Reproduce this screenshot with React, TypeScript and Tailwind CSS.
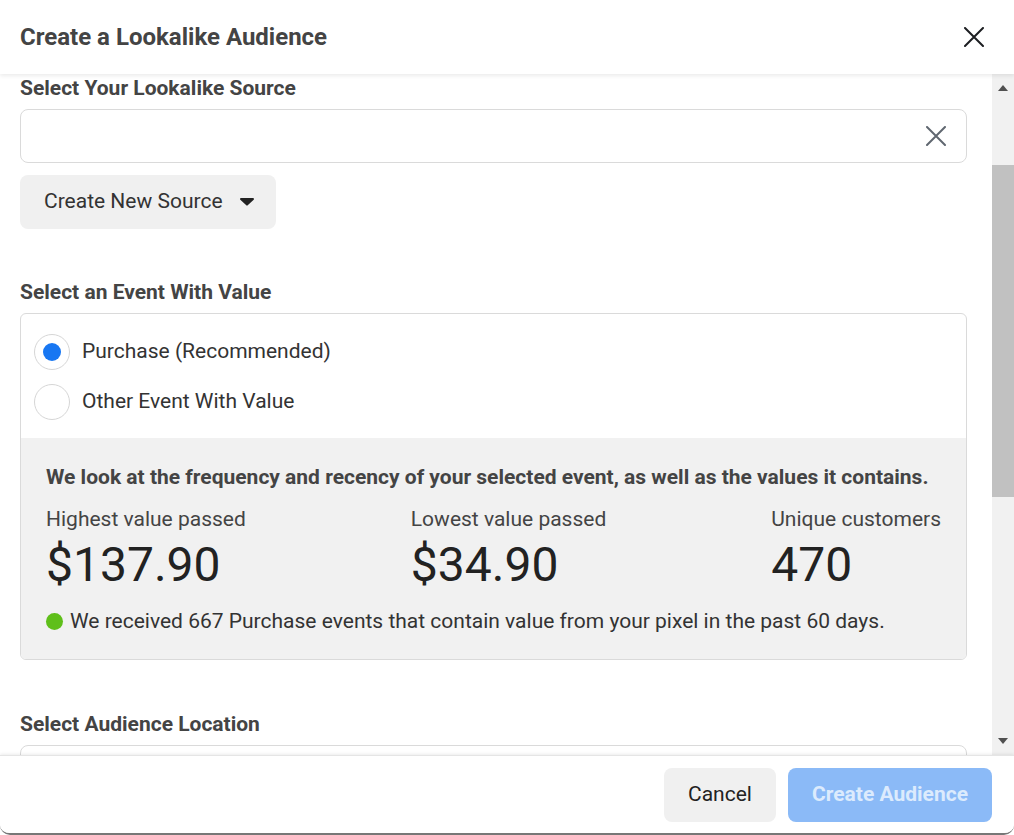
const font = { fontFamily: 'Roboto, "Liberation Sans", sans-serif' }

function Cross({ size, color, width }: { size: number; color: string; width: number }) {
  return (
    <svg width={size} height={size} viewBox={`0 0 ${size} ${size}`}>
      <path d={`M1 1L${size - 1} ${size - 1}M${size - 1} 1L1 ${size - 1}`} stroke={color} strokeWidth={width} strokeLinecap="round" />
    </svg>
  )
}

function Radio({ checked, label }: { checked?: boolean; label: string }) {
  return (
    <div className="flex items-center h-[50px]">
      <div className="w-[36px] h-[36px] rounded-full border border-[#d6d6d6] bg-white flex items-center justify-center">
        {checked && <div className="w-[18px] h-[18px] rounded-full bg-[#1877f2]" />}
      </div>
      <span className="ml-[12px] text-[21px] text-[#333]">{label}</span>
    </div>
  )
}

function Stat({ label, value }: { label: string; value: string }) {
  return (
    <div>
      <div className="text-[21px] text-[#444] leading-[26px]">{label}</div>
      <div className="text-[48px] text-[#222] leading-[56px] mt-[5px]">{value}</div>
    </div>
  )
}

export default function App() {
  return (
    <div style={font} className="w-[1014px] h-[835px] bg-white flex flex-col overflow-hidden rounded-b-[10px] border-b-2 border-[#777]">
      <div className="h-[74px] shrink-0 flex items-center justify-between pl-[20px] pr-[30px] shadow-[0_2px_4px_rgba(0,0,0,0.08)] relative z-10">
        <h1 className="text-[24px] font-bold text-[#444]">Create a Lookalike Audience</h1>
        <Cross size={20} color="#1c1e21" width={2} />
      </div>

      <div className="flex-1 flex min-h-0">
        <div className="flex-1 overflow-hidden pl-[20px] pr-[25px]">
          <div className="text-[21px] font-bold text-[#444] mt-[1px] leading-[26px]">Select Your Lookalike Source</div>
          <div className="mt-[8px] h-[54px] border border-[#dadada] rounded-[8px] flex items-center justify-end pr-[20px]">
            <Cross size={20} color="#606770" width={2} />
          </div>
          <div className="mt-[12px] inline-flex items-center h-[54px] bg-[#f0f0f0] rounded-[8px] pl-[24px] pr-[22px]">
            <span className="text-[21px] text-[#333]">Create New Source</span>
            <svg width="14" height="8" viewBox="0 0 14 8" className="ml-[17px]">
              <path d="M1 0h12a1 1 0 0 1 .7 1.7L7.7 7.3a1 1 0 0 1-1.4 0L.3 1.7A1 1 0 0 1 1 0z" fill="#222" />
            </svg>
          </div>

          <div className="text-[21px] font-bold text-[#444] mt-[50px] leading-[26px]">Select an Event With Value</div>
          <div className="mt-[8px] border border-[#dadada] rounded-[6px] overflow-hidden">
            <div className="pl-[13px] pt-[13px] pb-[11px]">
              <Radio checked label="Purchase (Recommended)" />
              <Radio label="Other Event With Value" />
            </div>
            <div className="bg-[#f1f1f1] px-[25px] pt-[26px] pb-[21px]">
              <div className="text-[21px] font-bold text-[#444] leading-[26px]">
                We look at the frequency and recency of your selected event, as well as the values it contains.
              </div>
              <div className="flex justify-between mt-[16px]">
                <Stat label="Highest value passed" value="$137.90" />
                <Stat label="Lowest value passed" value="$34.90" />
                <Stat label="Unique customers" value="470" />
              </div>
              <div className="flex items-center mt-[13px]">
                <div className="w-[17px] h-[17px] rounded-full bg-[#5fbf1a]" />
                <span className="ml-[7px] text-[21px] text-[#333]">
                  We received 667 Purchase events that contain value from your pixel in the past 60 days.
                </span>
              </div>
            </div>
          </div>

          <div className="text-[21px] font-bold text-[#444] mt-[51px] leading-[26px]">Select Audience Location</div>
          <div className="mt-[8px] h-[54px] border border-[#dadada] rounded-[8px]" />
        </div>

        <div className="w-[22px] shrink-0 bg-[#f1f1f1] flex flex-col items-center">
          <div className="h-[28px] flex items-center justify-center">
            <svg width="10" height="6" viewBox="0 0 10 6"><path d="M5 0l5 6H0z" fill="#505050" /></svg>
          </div>
          <div className="w-full h-[63px]" />
          <div className="w-full h-[332px] bg-[#c1c1c1]" />
          <div className="flex-1" />
          <div className="h-[28px] flex items-center justify-center">
            <svg width="10" height="6" viewBox="0 0 10 6"><path d="M0 0h10L5 6z" fill="#505050" /></svg>
          </div>
        </div>
      </div>

      <div className="h-[78px] shrink-0 flex items-center justify-end gap-[12px] pr-[22px] shadow-[0_-1px_3px_rgba(0,0,0,0.08)] border-t border-[#e5e5e5] relative z-10 bg-white">
        <button className="h-[54px] w-[112px] rounded-[8px] bg-[#f0f0f0] text-[21px] text-[#222]">Cancel</button>
        <button className="h-[54px] w-[204px] rounded-[8px] bg-[#8bbaf7] text-[21px] font-bold text-[#dcebfd]">Create Audience</button>
      </div>
    </div>
  )
}
